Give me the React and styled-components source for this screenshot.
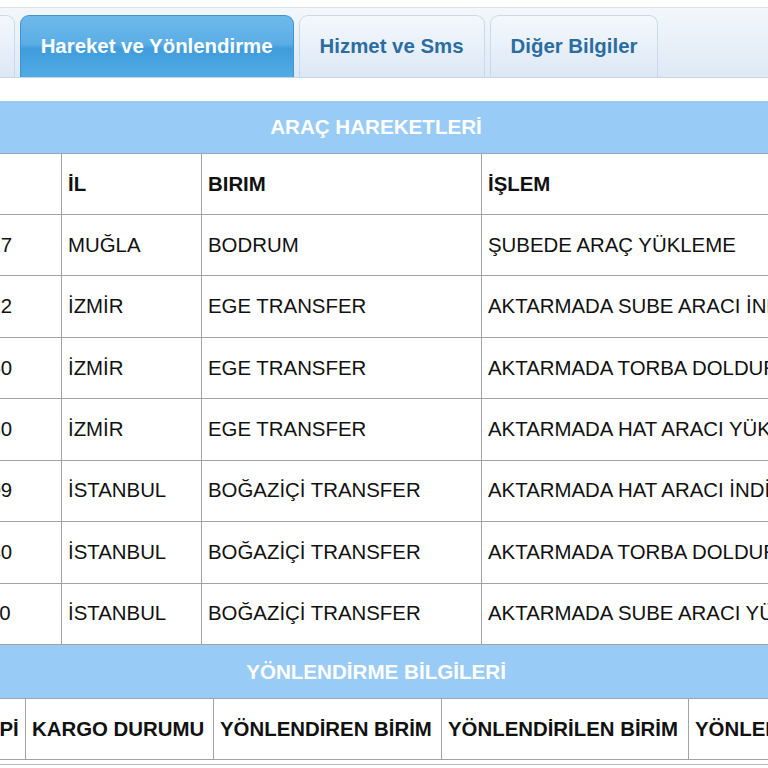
import React from 'react';
import styled, { createGlobalStyle } from 'styled-components';

const GlobalStyle = createGlobalStyle`
  html, body {
    margin: 0;
    padding: 0;
    background: #ffffff;
    overflow: hidden;
  }
  body {
    font-family: "Liberation Sans", Arial, sans-serif;
    color: #111;
  }
`;

const tabs = [
  { id: 'gonderi', label: 'Gönderi Bilgileri' },
  { id: 'hareket', label: 'Hareket ve Yönlendirme', active: true },
  { id: 'hizmet', label: 'Hizmet ve Sms' },
  { id: 'diger', label: 'Diğer Bilgiler' },
];

const hareketler = [
  ['14.06.2024 18:42:17', 'MUĞLA', 'BODRUM', 'ŞUBEDE ARAÇ YÜKLEME'],
  ['14.06.2024 04:15:22', 'İZMİR', 'EGE TRANSFER', 'AKTARMADA SUBE ARACI İNDİRME'],
  ['14.06.2024 01:37:50', 'İZMİR', 'EGE TRANSFER', 'AKTARMADA TORBA DOLDURMA'],
  ['13.06.2024 23:08:30', 'İZMİR', 'EGE TRANSFER', 'AKTARMADA HAT ARACI YÜKLEME'],
  ['13.06.2024 19:51:09', 'İSTANBUL', 'BOĞAZİÇİ TRANSFER', 'AKTARMADA HAT ARACI İNDİRME'],
  ['13.06.2024 14:26:40', 'İSTANBUL', 'BOĞAZİÇİ TRANSFER', 'AKTARMADA TORBA DOLDURMA'],
  ['13.06.2024 11:03:10', 'İSTANBUL', 'BOĞAZİÇİ TRANSFER', 'AKTARMADA SUBE ARACI YÜKLEME'],
];

const yonlendirmeCols = [
  { title: 'YÖNLENDİRME TİPİ', width: 207 },
  { title: 'KARGO DURUMU', width: 188 },
  { title: 'YÖNLENDİREN BİRİM', width: 228 },
  { title: 'YÖNLENDİRİLEN BİRİM', width: 247 },
  { title: 'YÖNLENDİRME TARİHİ', width: 246 },
];

export default function App() {
  return (
    <Page>
      <GlobalStyle />
      <TabBar>
        <TabList>
          {tabs.map((tab) => (
            <Tab key={tab.id} $active={tab.active}>
              {tab.label}
            </Tab>
          ))}
        </TabList>
      </TabBar>

      <Content>
        <SectionTitle>ARAÇ HAREKETLERİ</SectionTitle>
        <Table>
          <colgroup>
            <col style={{ width: 243 }} />
            <col style={{ width: 140 }} />
            <col style={{ width: 280 }} />
            <col style={{ width: 453 }} />
          </colgroup>
          <thead>
            <tr>
              <Th>TARİH</Th>
              <Th>İL</Th>
              <Th>BIRIM</Th>
              <Th>İŞLEM</Th>
            </tr>
          </thead>
          <tbody>
            {hareketler.map((row, key) => (
              <Row key={key}>
                {row.map((cell, i) => (
                  <Td key={i}>{cell}</Td>
                ))}
              </Row>
            ))}
          </tbody>
        </Table>

        <SectionTitle $second>YÖNLENDİRME BİLGİLERİ</SectionTitle>
        <Table>
          <colgroup>
            {yonlendirmeCols.map((c) => (
              <col key={c.title} style={{ width: c.width }} />
            ))}
          </colgroup>
          <thead>
            <tr>
              {yonlendirmeCols.map((c) => (
                <Th key={c.title} $tight>{c.title}</Th>
              ))}
            </tr>
          </thead>
        </Table>
        <Footer />
      </Content>
    </Page>
  );
}

const Page = styled.div`
  width: 768px;
  height: 768px;
  overflow: hidden;
  padding-top: 7px;
  box-sizing: border-box;
`;

const TabBar = styled.div`
  height: 69px;
  border-top: 1px solid #dde3ea;
  border-bottom: 1px solid #c4d5e6;
  background: linear-gradient(#f3f7fc, #dde9f5);
  display: flex;
  align-items: flex-end;
`;

const TabList = styled.div`
  display: flex;
  align-items: flex-end;
  gap: 5px;
  margin-left: -186px;
`;

const Tab = styled.div`
  height: 62px;
  padding: 0 20px;
  display: flex;
  align-items: center;
  box-sizing: border-box;
  border: 1px solid ${(p) => (p.$active ? '#3f95d1' : '#c9d9ea')};
  border-bottom: none;
  border-radius: 9px 9px 0 0;
  font-size: 20.4px;
  font-weight: bold;
  white-space: nowrap;
  color: ${(p) => (p.$active ? '#ffffff' : '#2b6ca1')};
  background: ${(p) =>
    p.$active
      ? 'linear-gradient(#6fb9ea 0%, #5aade5 46%, #3f9cdb 54%, #52abe4 100%)'
      : 'linear-gradient(#f4f8fd 0%, #e8f0f9 50%, #dce8f5 100%)'};
`;

const Content = styled.div`
  margin-top: 23px;
  margin-left: -182px;
  width: 1116px;
`;

const SectionTitle = styled.div`
  height: ${(p) => (p.$second ? '53px' : '52px')};
  display: flex;
  align-items: center;
  justify-content: center;
  background: #99cbf7;
  border-bottom: 1px solid #9aa6b2;
  color: #ffffff;
  font-size: 20.6px;
  font-weight: bold;
`;

const Table = styled.table`
  width: 100%;
  table-layout: fixed;
  border-collapse: collapse;
  font-size: 20.4px;
`;

const Row = styled.tr`
  height: 61.45px;
`;

const Th = styled.th`
  height: 60px;
  padding: 0 ${(p) => (p.$tight ? '8px' : '6px')} 0 6px;
  border: 1px solid #a3a3a3;
  border-top: none;
  text-align: left;
  font-weight: bold;
  white-space: nowrap;
  overflow: hidden;
  color: #111;
`;

const Td = styled.td`
  padding: 0 6px;
  border: 1px solid #a3a3a3;
  white-space: nowrap;
  overflow: hidden;
  color: #111;
`;

const Footer = styled.div`
  margin-top: 4px;
  height: 20px;
  border-top: 1px solid #b9b9b9;
`;
